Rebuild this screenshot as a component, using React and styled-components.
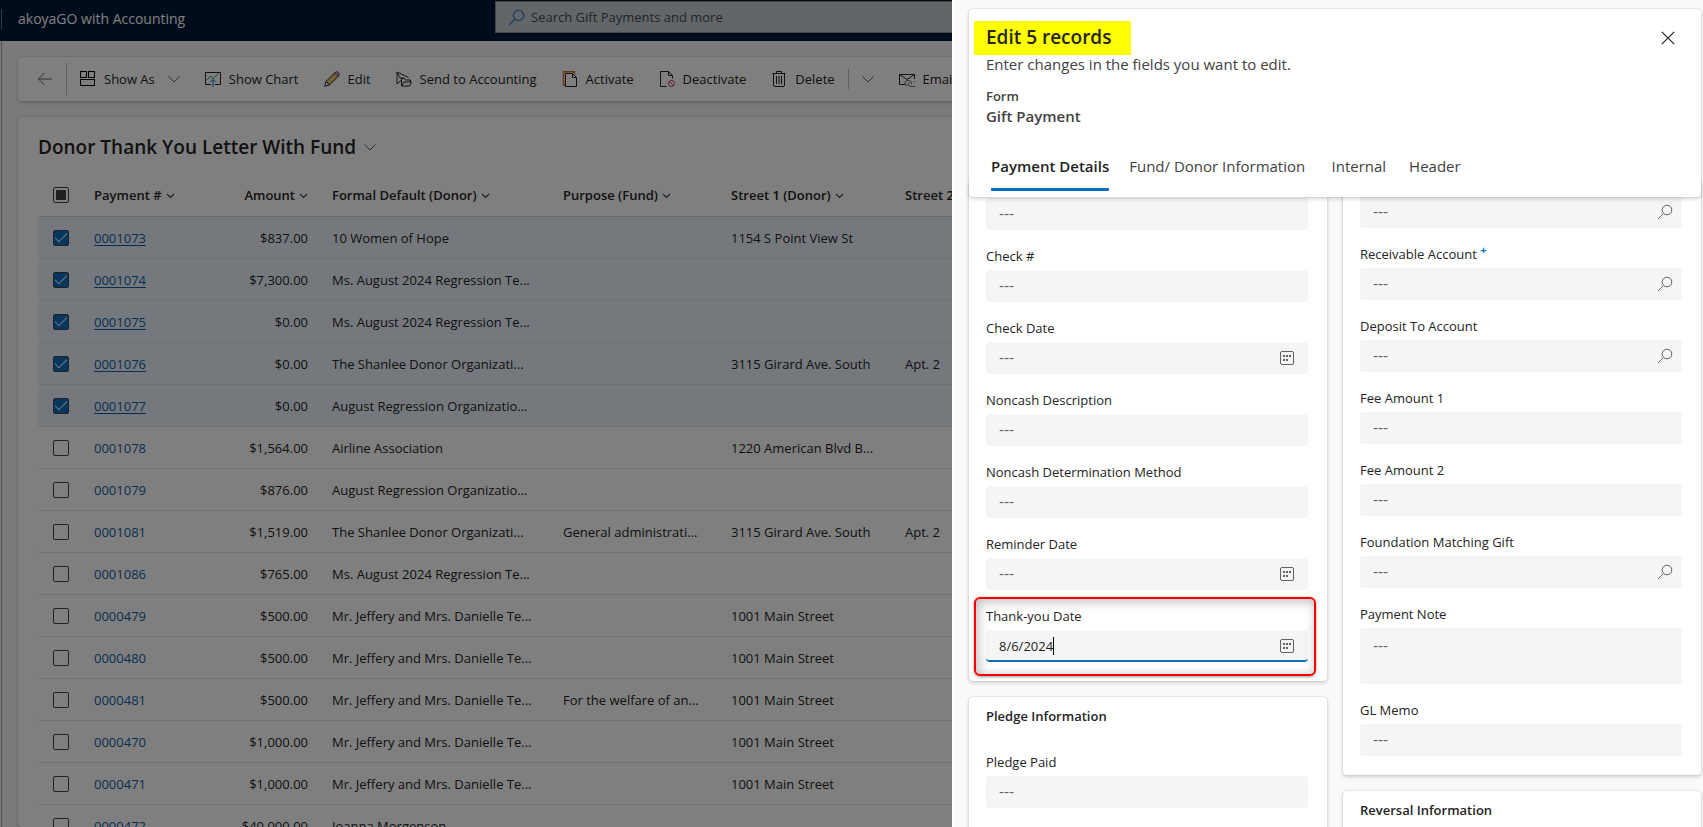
import React, { useState } from "react";
import styled, { createGlobalStyle, css } from "styled-components";

const GlobalStyle = createGlobalStyle`
  *, *::before, *::after { box-sizing: border-box; }
  body { margin: 0; background: #f5f5f5; }
  body, button, input, textarea {
    font-family: "Open Sans", "Noto Sans", sans-serif;
    font-size: 13px;
    line-height: 20px;
    color: #242424;
  }
  button { border: 0; padding: 0; background: none; }
  input::placeholder, textarea::placeholder { opacity: 1; }
`;

/* ---------- App shell ---------- */

const Shell = styled.div`
  height: 100vh;
  overflow: hidden;
  display: flex;
  flex-direction: column;
  background: #f5f5f5;
`;

const TopBar = styled.header`
  flex: none;
  height: 41px;
  padding-bottom: 8px;
  display: grid;
  grid-template-columns: 495px 1fr;
  background: #001737;
`;

const Brand = styled.div`
  display: flex;
  align-items: center;
  gap: 16px;
  color: #fff;
  padding-top: 4px;
  font-size: 14px;

  &::before {
    content: "";
    width: 1px;
    height: 20px;
    margin-left: 1px;
    background: #6f7c92;
  }
`;

const SearchBox = styled.label`
  display: flex;
  align-items: center;
  gap: 6px;
  height: 32px;
  margin-top: 1px;
  padding: 0 12px;
  border: 1px solid #8a8886;
  background: #c4cdd3;

  input {
    flex: 1;
    border: 0;
    outline: 0;
    padding: 0;
    background: none;
  }
  input::placeholder { color: #424a52; }
`;

const Workspace = styled.main`
  flex: 1;
  min-height: 0;
  margin-left: 1px;
  border-left: 1px solid #a8a8a8;
  padding: 16px 16px 0;
  display: flex;
  flex-direction: column;
  gap: 16px;
`;

const cardSkin = css`
  background: #fff;
  border-radius: 4px;
  box-shadow: 0 0 2px rgba(0, 0, 0, 0.2), 0 2px 4px rgba(0, 0, 0, 0.16);
`;

const CommandBar = styled.nav`
  ${cardSkin}
  flex: none;
  height: 44px;
  padding-left: 19px;
  display: flex;
  align-items: center;
  gap: 25px;
  overflow: hidden;
`;

const Command = styled.button`
  display: flex;
  align-items: center;
  gap: 8px;
  white-space: nowrap;
`;

const CommandGroup = styled.div`
  display: flex;
  align-items: center;
  gap: 13px;
`;

const Rule = styled.span`
  width: 1px;
  height: ${(p) => (p.$tall ? "32px" : "20px")};
  background: #bdbdbd;
`;

const GridCard = styled.section`
  ${cardSkin}
  flex: 1;
  min-height: 0;
  overflow: hidden;
  padding: 18px 0 0 20px;
`;

const ViewPicker = styled.button`
  display: flex;
  align-items: center;
  gap: 8px;
  font-size: 19px;
  font-weight: 600;
  line-height: 24px;
  margin-bottom: 15px;
`;

/* ---------- Data grid ---------- */

const Table = styled.table`
  width: 100%;
  table-layout: fixed;
  border-collapse: separate;
  border-spacing: 0;
`;

const Th = styled.th`
  height: 43px;
  padding: 0 12px;
  border-bottom: 1px solid #d1d1d1;
  text-align: ${(p) => (p.$end ? "right" : "left")};
  font-weight: 600;
  white-space: nowrap;

  svg { margin-left: 4px; }
`;

const Td = styled.td`
  height: 42px;
  padding: 0 12px;
  border-bottom: 1px solid #e0e0e0;
  text-align: ${(p) => (p.$end ? "right" : "left")};
  overflow: hidden;
  text-overflow: ellipsis;
  white-space: nowrap;
`;

const Tr = styled.tr`
  background: ${(p) => (p.$selected ? "#ebf3fc" : "transparent")};

  a {
    color: #115ea3;
    text-underline-offset: 2px;
    text-decoration: ${(p) => (p.$selected ? "underline" : "none")};
  }
  td:first-child { border-radius: 4px 0 0 4px; }
`;

const Check = styled.input.attrs({ type: "checkbox" })`
  appearance: none;
  display: grid;
  place-items: center;
  width: 16px;
  height: 16px;
  margin: 0 0 0 3px;
  border: 1px solid #424242;
  border-radius: 2px;

  &:checked { background: #0f6cbd; }
  &:checked::after {
    content: "";
    width: 12px;
    height: 6px;
    margin-bottom: 3px;
    border: solid #fff;
    border-width: 0 0 1px 1px;
    transform: rotate(-45deg);
  }
`;

const CheckAll = styled(Check)`
  &::after {
    content: "";
    width: 10px;
    height: 10px;
    border-radius: 1px;
    background: #424242;
  }
`;

/* ---------- Edit panel ---------- */

const Scrim = styled.div`
  position: fixed;
  inset: 0;
  display: flex;
  justify-content: flex-end;
  background: rgba(0, 0, 0, 0.5);
`;

const Panel = styled.aside`
  width: 44.1%;
  height: 100%;
  overflow: hidden;
  display: flex;
  flex-direction: column;
  padding: 9px 2px 0 15px;
  border-left: 2px solid #fff;
  background: #fafafa;
`;

const PanelHeader = styled.header`
  ${cardSkin}
  position: relative;
  z-index: 1;
  flex: none;
  padding: 12px 26px 6px 17px;
`;

const TitleRow = styled.div`
  display: flex;
  justify-content: space-between;
  align-items: center;
`;

const PanelTitle = styled.h1`
  margin: 0 0 0 -12px;
  padding: 4px 20px 6px 12px;
  background: #ff0;
  font-size: 19px;
  font-weight: 600;
  line-height: 24px;
`;

const Lead = styled.p`
  margin: 0 0 13px;
  font-size: 15px;
  line-height: 18px;
  color: #424242;
`;

const FormCaption = styled.div`
  font-weight: 600;
  color: #424242;
`;

const FormName = styled.div`
  margin-bottom: 30px;
  font-size: 15px;
  font-weight: 600;
  color: #424242;
`;

const Tabs = styled.div`
  display: flex;
  gap: 20px;
  padding-left: 5px;
`;

const Tab = styled.button`
  display: grid;
  justify-items: start;
  height: 35px;
  font-size: 15px;
  color: #424242;
  border-bottom: 3px solid transparent;

  /* the bold copy keeps the tab width steady when selection moves */
  &::after {
    content: attr(data-label);
    height: 0;
    overflow: hidden;
    visibility: hidden;
    font-weight: 600;
  }
  ${(p) =>
    p.$active &&
    css`
      border-bottom-color: #0f6cbd;
      border-radius: 1px;
      color: #242424;
      font-weight: 600;
    `}
`;

const PanelBody = styled.div`
  flex: 1;
  min-height: 0;
  margin-top: -16px;
  display: grid;
  grid-template-columns: 1fr 1fr;
  gap: 16px;
`;

const Column = styled.div`
  display: flex;
  flex-direction: column;
  gap: 16px;
`;

const Section = styled.section`
  ${cardSkin}
  display: flex;
  flex-direction: column;
  gap: 16px;
  padding: ${(p) => p.$top || 9}px 19px 19px 17px;

  &:last-child {
    flex: 1;
    border-radius: 4px 4px 0 0;
  }
`;

const SectionTitle = styled.h2`
  margin: 0 0 10px;
  font-size: 13px;
  font-weight: 600;
  line-height: 20px;
`;

const FieldBox = styled.div`
  position: relative;
  display: flex;
  flex-direction: column;
  gap: 4px;
`;

const Mark = styled.span`
  position: absolute;
  inset: -9px -8px -14px -12px;
  border: 2px solid #f00;
  border-radius: 6px;
  box-shadow: 0 1px 3px rgba(0, 0, 0, 0.4), inset 2px 2px 12px rgba(0, 0, 0, 0.28);
  pointer-events: none;
`;

const Required = styled.sup`
  color: #0078d4;
  font-size: 11px;
  font-weight: 700;
  line-height: 10px;
`;

const placeholderSkin = css`
  color: #616161;
  font-family: "DejaVu Sans", sans-serif;
  font-size: 14px;
`;

const Control = styled.div`
  display: flex;
  align-items: center;
  height: 32px;
  padding: 0 ${(p) => (p.$icon === "date" ? 14 : 9)}px 0 13px;
  border-radius: 4px;
  background: #f5f5f5;

  input {
    min-width: 0;
    flex: 1;
    padding: 0;
    border: 0;
    outline: 0;
    background: none;
  }
  input::placeholder { ${placeholderSkin} }

  ${(p) =>
    p.$focused &&
    css`
      border-bottom: 2px solid #0f6cbd;
      padding-top: 2px;
      input { flex: none; field-sizing: content; }
      svg { margin-left: auto; }
    `}
`;

const Caret = styled.span`
  width: 1px;
  height: 18px;
  background: #000;
`;

const Area = styled.textarea`
  display: block;
  height: 56px;
  padding: 8px 13px;
  border: 0;
  border-radius: 4px;
  background: #f5f5f5;
  resize: none;
  &::placeholder { ${placeholderSkin} }
`;

/* ---------- Icons ---------- */

const Svg = ({ w = 16, h = w, children, color = "#242424" }) => (
  <svg width={w} height={h} viewBox={`0 0 ${w} ${h}`} fill="none" stroke={color} aria-hidden="true">
    {children}
  </svg>
);

const Chevron = () => (
  <Svg w={12} color="#616161"><path d="M.5 3.5 6 9l5.500-5.500" /></Svg>
);
const SortChevron = () => (
  <Svg w={9} h={8} color="#424242"><path d="M1 2l3.500 3.500L8 2" strokeWidth="1.200" /></Svg>
);
const BackIcon = () => (
  <Svg color="#616161"><path d="M15 8H1.500M7.500 2l-6 6 6 6" /></Svg>
);
const LayoutIcon = () => (
  <Svg color="#000">
    <rect x=".5" y=".5" width="6" height="6" />
    <rect x="8.500" y=".5" width="6" height="6" />
    <rect x=".5" y="8.500" width="14" height="6" />
  </Svg>
);
const ChartIcon = () => (
  <Svg>
    <path d="M6 13.500H.5V1.500h15v12H10" />
    <path d="M2 9l3.500-4L8 7.500 13.500 2.500" stroke="#2b9a5c" />
    <path d="M8 16V8.500M5.500 11 8 8.500l2.500 2.500" stroke="#0f6cbd" />
  </Svg>
);
const PencilIcon = () => (
  <Svg>
    <path d="M2 10.500 11 1.500l3.500 3.500-9 9z" fill="#e9c46a" />
    <path d="M2 10.500.7 15.300 5.500 14z" fill="#fff" />
    <path d="M10.500 2 12 .9q1-.7 2 .2l.9.900q.9 1 .2 2L14 5.500z" fill="#c39ac0" stroke="#73507a" />
  </Svg>
);
const SendIcon = () => (
  <Svg>
    <path d="M5 9.500 1 13V1l11.500 5.500M1 1l3 6h4" />
    <path d="M5.500 15V7.500h3l1 1.500h5v2M5.500 15h8l2-4h-7.500z" />
  </Svg>
);
const ActivateIcon = () => (
  <Svg>
    <path d="M3 14H1.500V.7h11V3" stroke="#c8691c" strokeWidth="1.400" />
    <path d="M3.500 2.500h7l4 4v9h-11zM10.500 2.500v4h4" />
  </Svg>
);
const DeactivateIcon = () => (
  <Svg>
    <path d="M7.500 15.500h-6V.5h8l4 4v3M9.500.5v4h4" />
    <circle cx="12.500" cy="12.500" r="3" stroke="#c4314b" />
    <path d="M10.500 10.500l4 4" stroke="#c4314b" />
  </Svg>
);
const TrashIcon = () => (
  <Svg><path d="M1.500 2.500h13M5.500 2.500v-2h5v2M2.500 2.500V14q0 1.500 1.500 1.500h8q1.500 0 1.500-1.500V2.500M5.500 5v8M8 5v8M10.500 5v8" /></Svg>
);
const MailIcon = () => (
  <Svg>
    <path d="M6 13.500H.5v-10h15V8M.5 3.500 8 8.500l7.500-5" />
    <path d="M8.500 14.500a2.500 2.500 0 0 1 0-5h2a2.500 2.500 0 0 1 1.500 4M15 10.500a2.500 2.500 0 0 1-1.500 5h-2a2.500 2.500 0 0 1-1-4.500" stroke="#616161" />
  </Svg>
);
const SearchIcon = ({ color = "#616161", size = 16 }) => (
  <svg width={size} height={size} viewBox="0 0 16 16" fill="none" stroke={color} aria-hidden="true">
    <circle cx="10" cy="6" r="4.800" /><path d="M6.500 9.500 1 15" />
  </svg>
);
const CalendarIcon = () => (
  <Svg w={14} color="#616161">
    <rect x=".5" y=".5" width="13" height="13" rx="1.500" />
    <path d="M3 5h2M6 5h2M9 5h2M3 9h2M6 9h2" strokeWidth="2" />
  </Svg>
);
const CloseIcon = () => (
  <Svg w={14}><path d="M.8.8l12.400 12.400M13.200.8.8 13.200" strokeWidth="1.200" /></Svg>
);

/* ---------- Data ---------- */

const rows = [
  ["0001073", "$837.00", "10 Women of Hope", "", "1154 S Point View St", ""],
  ["0001074", "$7,300.00", "Ms. August 2024 Regression Te...", "", "", ""],
  ["0001075", "$0.00", "Ms. August 2024 Regression Te...", "", "", ""],
  ["0001076", "$0.00", "The Shanlee Donor Organizati...", "", "3115 Girard Ave. South", "Apt. 2"],
  ["0001077", "$0.00", "August Regression Organizatio...", "", "", ""],
  ["0001078", "$1,564.00", "Airline Association", "", "1220 American Blvd B...", ""],
  ["0001079", "$876.00", "August Regression Organizatio...", "", "", ""],
  ["0001081", "$1,519.00", "The Shanlee Donor Organizati...", "General administrati...", "3115 Girard Ave. South", "Apt. 2"],
  ["0001086", "$765.00", "Ms. August 2024 Regression Te...", "", "", ""],
  ["0000479", "$500.00", "Mr. Jeffery and Mrs. Danielle Te...", "", "1001 Main Street", ""],
  ["0000480", "$500.00", "Mr. Jeffery and Mrs. Danielle Te...", "", "1001 Main Street", ""],
  ["0000481", "$500.00", "Mr. Jeffery and Mrs. Danielle Te...", "For the welfare of an...", "1001 Main Street", ""],
  ["0000470", "$1,000.00", "Mr. Jeffery and Mrs. Danielle Te...", "", "1001 Main Street", ""],
  ["0000471", "$1,000.00", "Mr. Jeffery and Mrs. Danielle Te...", "", "1001 Main Street", ""],
  ["0000472", "$40,000.00", "Joanna Morgenson", "", "", ""],
];

const columns = [
  { label: "Payment #", width: 105 },
  { label: "Amount", width: 133, end: true },
  { label: "Formal Default (Donor)", width: 231 },
  { label: "Purpose (Fund)", width: 168 },
  { label: "Street 1 (Donor)", width: 174 },
  { label: "Street 2 (Donor)" },
];

const tabs = ["Payment Details", "Fund/ Donor Information", "Internal", "Header"];

function Field({ label, name, icon, required, multiline, value, focused, marked }) {
  const id = (label || name).toLowerCase().replace(/[^a-z0-9]+/g, "-");
  const [text, setText] = useState(value || "");
  const shared = {
    id,
    placeholder: "---",
    value: text,
    onChange: (e) => setText(e.target.value),
    "aria-label": label ? undefined : name,
  };
  return (
    <FieldBox>
      {label && (
        <label htmlFor={id}>
          {label} {required && <Required>+</Required>}
        </label>
      )}
      {multiline ? (
        <Area {...shared} />
      ) : (
        <Control $icon={icon} $focused={focused}>
          <input type="text" {...shared} />
          {focused && <Caret />}
          {icon === "date" && <CalendarIcon />}
          {icon === "lookup" && <SearchIcon />}
        </Control>
      )}
      {marked && <Mark />}
    </FieldBox>
  );
}

export default function App() {
  const [selected, setSelected] = useState(() => new Set(rows.slice(0, 5).map((r) => r[0])));
  const [tab, setTab] = useState(tabs[0]);

  const toggle = (id) =>
    setSelected((prev) => {
      const next = new Set(prev);
      next.has(id) ? next.delete(id) : next.add(id);
      return next;
    });

  return (
    <>
      <GlobalStyle />
      <Shell>
        <TopBar>
          <Brand>akoyaGO with Accounting</Brand>
          <SearchBox>
            <SearchIcon color="#2266c4" size={17} />
            <input type="search" placeholder="Search Gift Payments and more" aria-label="Search" />
          </SearchBox>
        </TopBar>
        <Workspace>
          <CommandBar>
            <CommandGroup>
              <Command aria-label="Back"><BackIcon /></Command>
              <Rule $tall />
              <Command><LayoutIcon /> Show As</Command>
              <Command aria-label="Show As options"><Chevron /></Command>
            </CommandGroup>
            <Command><ChartIcon /> Show Chart</Command>
            <Command><PencilIcon /> Edit</Command>
            <Command><SendIcon /> Send to Accounting</Command>
            <Command><ActivateIcon /> Activate</Command>
            <Command><DeactivateIcon /> Deactivate</Command>
            <CommandGroup>
              <Command><TrashIcon /> Delete</Command>
              <Rule />
              <Command aria-label="Delete options"><Chevron /></Command>
            </CommandGroup>
            <Command><MailIcon /> Email a Link</Command>
          </CommandBar>
          <GridCard>
            <ViewPicker>Donor Thank You Letter With Fund <Chevron /></ViewPicker>
            <Table>
              <colgroup>
                <col width={44} />
                {columns.map((c) => <col key={c.label} width={c.width} />)}
              </colgroup>
              <thead>
                <tr>
                  <Th><CheckAll aria-label="Select all rows" /></Th>
                  {columns.map((c) => (
                    <Th key={c.label} $end={c.end}>{c.label}<SortChevron /></Th>
                  ))}
                </tr>
              </thead>
              <tbody>
                {rows.map(([id, ...cells]) => (
                  <Tr key={id} $selected={selected.has(id)}>
                    <Td>
                      <Check
                        aria-label={`Select ${id}`}
                        checked={selected.has(id)}
                        onChange={() => toggle(id)}
                      />
                    </Td>
                    <Td><a href={`#${id}`}>{id}</a></Td>
                    {cells.map((c, i) => <Td key={i} $end={i === 0}>{c}</Td>)}
                  </Tr>
                ))}
              </tbody>
            </Table>
          </GridCard>
        </Workspace>
      </Shell>

      <Scrim>
        <Panel role="dialog" aria-labelledby="panel-title">
          <PanelHeader>
            <TitleRow>
              <PanelTitle id="panel-title">Edit 5 records</PanelTitle>
              <Command aria-label="Close"><CloseIcon /></Command>
            </TitleRow>
            <Lead>Enter changes in the fields you want to edit.</Lead>
            <FormCaption>Form</FormCaption>
            <FormName>Gift Payment</FormName>
            <Tabs role="tablist">
              {tabs.map((t) => (
                <Tab
                  key={t}
                  role="tab"
                  data-label={t}
                  aria-selected={t === tab}
                  $active={t === tab}
                  onClick={() => setTab(t)}
                >
                  {t}
                </Tab>
              ))}
            </Tabs>
          </PanelHeader>
          <PanelBody>
            <Column>
              <Section $top={17}>
                <Field name="Payment Method" />
                <Field label="Check #" />
                <Field label="Check Date" icon="date" />
                <Field label="Noncash Description" />
                <Field label="Noncash Determination Method" />
                <Field label="Reminder Date" icon="date" />
                <Field label="Thank-you Date" icon="date" value="8/6/2024" focused marked />
              </Section>
              <Section>
                <SectionTitle>Pledge Information</SectionTitle>
                <Field label="Pledge Paid" />
              </Section>
            </Column>
            <Column>
              <Section $top={15}>
                <Field name="Account" icon="lookup" />
                <Field label="Receivable Account" icon="lookup" required />
                <Field label="Deposit To Account" icon="lookup" />
                <Field label="Fee Amount 1" />
                <Field label="Fee Amount 2" />
                <Field label="Foundation Matching Gift" icon="lookup" />
                <Field label="Payment Note" multiline />
                <Field label="GL Memo" />
              </Section>
              <Section>
                <SectionTitle>Reversal Information</SectionTitle>
              </Section>
            </Column>
          </PanelBody>
        </Panel>
      </Scrim>
    </>
  );
}
